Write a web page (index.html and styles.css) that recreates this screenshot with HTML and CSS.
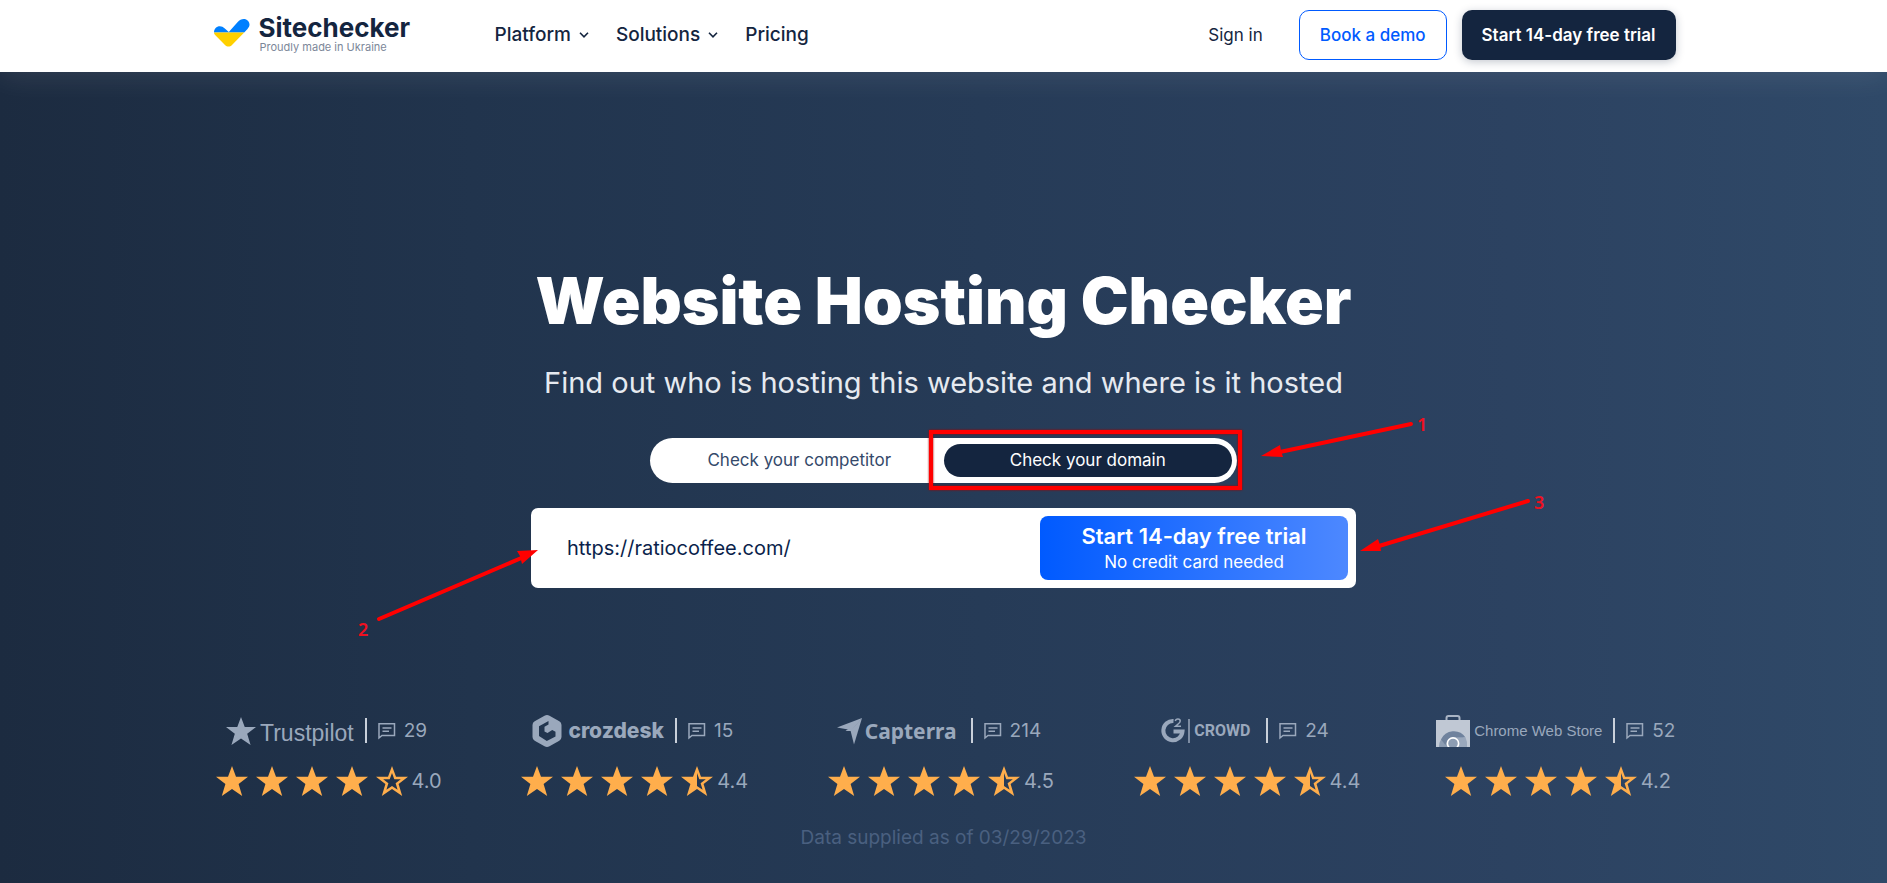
FILE: index.html
```html
<!DOCTYPE html>
<html lang="en">
<head>
  <meta charset="UTF-8" />
  <meta name="viewport" content="width=device-width, initial-scale=1.0"/>
  <title>Website Hosting Checker</title>
  <link rel="stylesheet" href="styles.css">
</head>
<body>
  <!-- shared icons -->
  <svg class="sprite" aria-hidden="true">
    <symbol id="star" viewBox="0 0 40 40">
      <path d="M20 5l4 10.800h12l-9.400 7.200 3.600 12L20 28l-10.200 7 3.600-12L4 15.800h12z"/>
    </symbol>
    <symbol id="star-empty" viewBox="0 0 40 40">
      <path fill-rule="evenodd" d="M20 5l4 10.800h12l-9.400 7.200 3.600 12L20 28l-10.200 7 3.600-12L4 15.800h12zM20 12l-2.300 6.200h-6.500l5.200 4-2 6.600 5.600-3.900 5.600 3.900-2-6.600 5.200-4h-6.500z"/>
    </symbol>
    <symbol id="star-half" viewBox="0 0 40 40">
      <path fill-rule="evenodd" d="M20 5l4 10.800h12l-9.400 7.200 3.600 12L20 28l-10.200 7 3.600-12L4 15.800h12zM20 12v12.900l5.600 3.900-2-6.600 5.200-4h-6.500z"/>
    </symbol>
    <symbol id="comment" viewBox="0 0 18 18">
      <path fill="none" stroke="currentColor" stroke-width="1.500" d="M1 16V1.700h15.500v11.800H4zM4.500 6h9M4.500 9.200h6.500"/>
    </symbol>
    <symbol id="chevron" viewBox="0 0 10 6">
      <path fill="none" stroke="currentColor" stroke-width="1.600" d="M1 .800l4 4 4-4"/>
    </symbol>
  </svg>

  <header class="header">
    <div class="container header-inner">
      <a href="#" class="logo">
        <svg class="logo-mark" width="36" height="28" viewBox="0 0 36 28" aria-hidden="true">
          <path fill="#0080ff" d="M0 13.500C0 10 2.500 7.300 5.800 7.300c2 0 3.400.700 4.700 2l4.300 3.700 8.700-9.800C25.500 1 27.500 0 29.800 0 33 0 35.500 2.500 35.500 5.600c0 1.800-.700 3-2 4.300l-3.300 3.600z"/>
          <path fill="#ffd000" d="M0 13.500h30.200L18 26c-2 2-5 2-7 0L1.600 16.600C.600 15.600 0 14.700 0 13.500z"/>
        </svg>
        <span class="logo-text">
          <span class="logo-name">Sitechecker</span>
          <span class="logo-tag">Proudly made in Ukraine</span>
        </span>
      </a>
      <nav class="nav">
        <button type="button" class="nav-item">Platform <svg width="10" height="6"><use href="#chevron"/></svg></button>
        <button type="button" class="nav-item">Solutions <svg width="10" height="6"><use href="#chevron"/></svg></button>
        <a href="#" class="nav-item">Pricing</a>
      </nav>
      <div class="actions">
        <a href="#" class="sign-in">Sign in</a>
        <button type="button" class="btn btn-outline">Book a demo</button>
        <button type="button" class="btn btn-dark">Start 14-day free trial</button>
      </div>
    </div>
  </header>

  <main class="hero">
    <h1>Website Hosting Checker</h1>
    <p class="subtitle">Find out who is hosting this website and where is it hosted</p>

    <form class="check-form">
      <div class="toggle">
        <input type="radio" name="target" id="competitor">
        <label for="competitor">Check your competitor</label>
        <input type="radio" name="target" id="domain" checked>
        <label for="domain">Check your domain</label>
      </div>
      <div class="search">
        <input type="text" class="search-input" aria-label="Website URL" value="https://ratiocoffee.com/">
        <button type="button" class="search-btn">
          <span class="search-btn-title">Start 14-day free trial</span>
          <span class="search-btn-note">No credit card needed</span>
        </button>
      </div>
    </form>

    <div class="container ratings">
      <div class="rating">
        <div class="source">
          <span class="brand trustpilot">
            <svg width="30" height="30" viewBox="4 5 32 30"><use href="#star" width="40" height="40"/></svg>
            <span>Trustpilot</span>
          </span>
          <span class="reviews"><svg width="18" height="18"><use href="#comment"/></svg>29</span>
        </div>
        <div class="stars">
          <svg><use href="#star"/></svg><svg><use href="#star"/></svg><svg><use href="#star"/></svg><svg><use href="#star"/></svg><svg><use href="#star-empty"/></svg>
          <span>4.0</span>
        </div>
      </div>

      <div class="rating">
        <div class="source">
          <span class="brand crozdesk">
            <svg width="30" height="32" viewBox="0 0 30 32">
              <path fill-rule="evenodd" d="M12.500.700q2.500-1.300 5 0l9.800 5.500Q29.500 7.500 29.500 10v12q0 2.500-2.200 3.800l-9.800 5.500q-2.500 1.300-5 0l-9.800-5.500Q.500 24.500.500 22V10q0-2.500 2.200-3.800zM16.500 6L7 11.300v9.600l7.800 5.100 8.700-4.600v-4.600l-3.300-1.700-4.700 3-3-1.700v-4.600l4-2.300z"/>
            </svg>
            <span>crozdesk</span>
          </span>
          <span class="reviews"><svg width="18" height="18"><use href="#comment"/></svg>15</span>
        </div>
        <div class="stars">
          <svg><use href="#star"/></svg><svg><use href="#star"/></svg><svg><use href="#star"/></svg><svg><use href="#star"/></svg><svg><use href="#star-half"/></svg>
          <span>4.4</span>
        </div>
      </div>

      <div class="rating">
        <div class="source">
          <span class="brand capterra">
            <svg width="26" height="27" viewBox="0 0 26 27">
              <path d="M0 9.500L25 0 14 12z"/>
              <path d="M25 0L17 26.500l-3.500-14z"/>
              <path d="M25 0L8.500 13l5.500 0z"/>
            </svg>
            <span>Capterra</span>
          </span>
          <span class="reviews"><svg width="18" height="18"><use href="#comment"/></svg>214</span>
        </div>
        <div class="stars">
          <svg><use href="#star"/></svg><svg><use href="#star"/></svg><svg><use href="#star"/></svg><svg><use href="#star"/></svg><svg><use href="#star-half"/></svg>
          <span>4.5</span>
        </div>
      </div>

      <div class="rating">
        <div class="source">
          <span class="brand crowd">
            <svg width="29" height="26" viewBox="0 0 29 26">
              <path fill="none" stroke="currentColor" stroke-width="4" d="M12.500 3A9.600 9.600 0 1 0 21.500 13.500H12.500"/>
              <path fill="none" stroke="currentColor" stroke-width="1.500" d="M14.300 3q.400-2 2.600-2 2.300 0 2.300 2 0 1.300-1.500 2.500L14.500 8.300H20M28 1v24"/>
            </svg>
            <span>CROWD</span>
          </span>
          <span class="reviews"><svg width="18" height="18"><use href="#comment"/></svg>24</span>
        </div>
        <div class="stars">
          <svg><use href="#star"/></svg><svg><use href="#star"/></svg><svg><use href="#star"/></svg><svg><use href="#star"/></svg><svg><use href="#star-half"/></svg>
          <span>4.4</span>
        </div>
      </div>

      <div class="rating">
        <div class="source">
          <span class="brand chrome">
            <svg width="34" height="32" viewBox="0 0 34 32">
              <path fill="none" stroke="#a9b4c4" stroke-width="2" d="M10.500 6V3q0-2 2-2h9q2 0 2 2v3"/>
              <path fill="#c0c8d4" d="M0 5h34v27H0z"/>
              <path fill="#8d9db3" d="M3 32a14 14 0 0 1 28 0z"/>
              <path fill="#6f829d" d="M5 24.500a14 14 0 0 1 24.500-2H17q-5 0-6.500 4.500l-1 3z"/>
              <path fill="#9aa8bc" d="M17 22.500h12.500q2 4 1.500 9.500h-8z"/>
              <circle cx="17" cy="28.500" r="5.600" fill="#8d9db3" stroke="#fff" stroke-width="1.600"/>
            </svg>
            <span>Chrome Web Store</span>
          </span>
          <span class="reviews"><svg width="18" height="18"><use href="#comment"/></svg>52</span>
        </div>
        <div class="stars">
          <svg><use href="#star"/></svg><svg><use href="#star"/></svg><svg><use href="#star"/></svg><svg><use href="#star"/></svg><svg><use href="#star-half"/></svg>
          <span>4.2</span>
        </div>
      </div>
    </div>

    <p class="supplied">Data supplied as of 03/29/2023</p>

    <!-- step markers drawn over the form -->
    <svg class="steps" width="1200" height="240" viewBox="0 0 1200 240">
      <defs>
        <filter id="glow" x="-5%" y="-10%" width="110%" height="120%">
          <feDropShadow dx="0" dy="0" stdDeviation="1" flood-color="#a00000"/>
        </filter>
      </defs>
      <rect x="587" y="22" width="309" height="56" fill="none" stroke="#f00" stroke-width="4" filter="url(#glow)"/>
      <g stroke="#f00" stroke-width="4" stroke-linecap="round">
        <path d="M1067 14L936 42"/>
        <path d="M35 209L182 146"/>
        <path d="M1184 91L1035 136"/>
      </g>
      <g fill="#f00">
        <path d="M917 46l19-11 1 6 2 6z"/>
        <path d="M194 140l-21 1 3 5 2 8z"/>
        <path d="M1016 141l18-12 2 6 1 6z"/>
      </g>
      <text x="1073" y="21">1</text>
      <text x="14" y="226">2</text>
      <text x="1190" y="99">3</text>
    </svg>
  </main>
</body>
</html>
```

FILE: styles.css
```css
* {
  box-sizing: border-box;
}
body {
  margin: 0;
  font-family: Inter, "Open Sans", sans-serif;
  font-size: 19px;
  color: #14253f;
  background: #fff;
}
a {
  color: inherit;
  text-decoration: none;
}
button {
  font: inherit;
  color: inherit;
  border: 0;
  cursor: pointer;
}
.sprite {
  display: none;
}
.container {
  width: 100%;
  max-width: 1504px;
  margin: 0 auto;
  padding: 0 20px;
}

/* header */
.header {
  position: relative;
  z-index: 1;
  padding-bottom: 2px;
  background: #fff;
  box-shadow: 0 4px 30px rgba(255, 255, 255, 0.1);
}
.header-inner {
  display: flex;
  align-items: center;
  height: 70px;
}
.logo {
  display: flex;
  align-items: center;
  gap: 9px;
  width: 283px;
  padding: 0 0 4px 2px;
}
.logo-text {
  display: flex;
  flex-direction: column;
}
.logo-name {
  font-size: 26px;
  line-height: 27px;
  font-weight: 700;
}
.logo-tag {
  padding-left: 1px;
  font-size: 11px;
  line-height: 12px;
  color: #7c8799;
}
.nav {
  display: flex;
  gap: 27px;
}
.nav-item {
  display: flex;
  align-items: center;
  gap: 8px;
  padding: 0;
  background: none;
  font-size: 19px;
  line-height: 24px;
  font-weight: 500;
}
.actions {
  display: flex;
  align-items: center;
  margin-left: auto;
}
.sign-in {
  margin-right: 36px;
  font-size: 17px;
}
.btn {
  height: 50px;
  padding: 0 20px;
  border-radius: 10px;
  font-size: 17px;
}
.btn-outline {
  border: 1px solid #005aff;
  background: #fff;
  color: #005aff;
  font-weight: 500;
}
.btn-dark {
  margin-left: 15px;
  background: #14253f;
  color: #fff;
  font-weight: 600;
  box-shadow: 0 2px 8px rgba(20, 37, 63, 0.25);
}

/* hero */
.hero {
  position: relative;
  min-height: calc(100vh - 72px);
  padding: 193px 0 32px;
  background: linear-gradient(90deg, #1c2b40 0%, #21344d 25%, #263b57 52%, #2c4261 80%, #2f4968 100%);
  text-align: center;
}
h1 {
  margin: 0;
  font-size: 64px;
  line-height: 72px;
  font-weight: 900;
  color: #fff;
}
.subtitle {
  margin: 26px 0 35px;
  font-size: 29px;
  line-height: 40px;
  font-weight: 400;
  color: #e6eaf0;
}
.check-form {
  max-width: 825px;
  margin: 0 auto;
}
.toggle {
  display: grid;
  grid-template-columns: 1fr 1fr;
  max-width: 587px;
  margin: 0 auto 25px;
  padding: 6px 5px;
  border-radius: 23px;
  background: #fff;
}
.toggle input {
  position: absolute;
  opacity: 0;
}
.toggle label {
  border-radius: 17px;
  font-size: 17px;
  line-height: 33px;
  color: #34496a;
  cursor: pointer;
}
.toggle input:checked + label {
  background: #14253f;
  color: #fff;
}
.search {
  display: flex;
  padding: 8px;
  border-radius: 7px;
  background: #fff;
}
.search-input {
  flex: 1;
  min-width: 0;
  padding: 0 28px;
  border: 0;
  outline: 0;
  font: inherit;
  font-size: 20px;
  color: #0b1f4b;
}
.search-btn {
  display: flex;
  flex-direction: column;
  align-items: center;
  justify-content: center;
  width: 308px;
  height: 64px;
  border-radius: 8px;
  background: linear-gradient(90deg, #005aff, #4d88ff);
  color: #fff;
}
.search-btn-title {
  font-size: 22px;
  line-height: 28px;
  font-weight: 600;
}
.search-btn-note {
  font-size: 17px;
  line-height: 24px;
}

/* ratings */
.ratings {
  display: flex;
  justify-content: space-between;
  margin-top: 127px;
  color: #9aa8bc;
}
.rating {
  display: flex;
  flex-direction: column;
  align-items: center;
  gap: 14px;
}
.source {
  display: flex;
  height: 32px;
}
.brand {
  display: flex;
  align-items: center;
  gap: 4px;
  padding-right: 11px;
  white-space: nowrap;
}
.brand svg,
.stars svg {
  fill: currentColor;
}
.trustpilot {
  font: 23px/32px "Liberation Sans", Arial, sans-serif;
}
.trustpilot span {
  padding-top: 4px;
}
.crozdesk {
  gap: 6px;
  font: 800 21px/32px Inter, sans-serif;
}
.capterra {
  gap: 2px;
  padding-right: 14px;
  font: 700 21px/32px "Noto Sans", sans-serif;
}
.crowd {
  padding-right: 16px;
  font: 700 16px/32px Roboto, sans-serif;
}
.chrome {
  font: 15px/32px "Liberation Sans", Arial, sans-serif;
}
.reviews {
  display: flex;
  align-items: center;
  gap: 8px;
  height: 25px;
  margin-top: 3px;
  padding-left: 11px;
  border-left: 2px solid #c9d0da;
}
.stars {
  display: flex;
  align-items: center;
  font-size: 20px;
}
.stars svg {
  width: 40px;
  height: 40px;
  color: #ffae4c;
}
.supplied {
  margin: 25px 0 0;
  line-height: 24px;
  color: #4a6080;
}

/* step markers */
.steps {
  position: absolute;
  top: 338px;
  left: 50%;
  margin-left: -600px;
  pointer-events: none;
}
.steps text {
  fill: #f01020;
  font: 600 18px "Noto Sans", sans-serif;
}
```
